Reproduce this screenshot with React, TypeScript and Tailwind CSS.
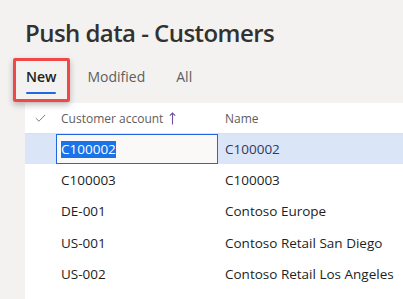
import React from 'react';
import { Check } from 'lucide-react';

const rows = [
  { account: 'C100003', name: 'C100003' },
  { account: 'DE-001', name: 'Contoso Europe' },
  { account: 'US-001', name: 'Contoso Retail San Diego' },
  { account: 'US-002', name: 'Contoso Retail Los Angeles' },
];

export default function App() {
  return (
    <div className="relative flex flex-col w-[403px] h-[299px] overflow-hidden bg-[#f3f2f1] font-['Open_Sans',sans-serif] text-[#323130]">
      {/* Page title */}
      <h1 className="pl-[25px] pt-[17px] text-[24px] leading-[32px] font-semibold tracking-[-0.55px]">
        Push data - Customers
      </h1>

      {/* Tabs */}
      <div className="flex gap-[31px] pl-[26px] mt-[18px] text-[14px] leading-[20px]">
        <div className="flex flex-col">
          <span className="font-semibold text-[#201f1e]">New</span>
          <div className="mt-[5px] h-[2px] rounded-full bg-[#2266e3]" />
        </div>
        <span className="text-[#605e5c]">Modified</span>
        <span className="text-[#605e5c]">All</span>
      </div>

      {/* Grid */}
      <div className="flex-1 ml-[25px] mt-[9px] bg-white text-[13.5px]">
        <div className="flex h-[31px] items-center border-b border-[#e1dfdd] text-[12px] text-[#605e5c]">
          <div className="w-[31px] flex justify-center pt-[1px]">
            <Check size={13} strokeWidth={1.5} className="text-[#605e5c]" />
          </div>
          <div className="w-[162px] pl-[5px] pt-[1px] flex items-center gap-[6px]">
            Customer account
            <svg width="7" height="13" viewBox="0 0 7 13" fill="none" stroke="#6b4fa8" strokeWidth="1.1">
              <path d="M3.5 12.5V1M0.8 3.7L3.5 1L6.2 3.7" />
            </svg>
          </div>
          <div className="pl-[7px] pt-[1px]">Name</div>
        </div>

        <div className="flex h-[30px] items-stretch bg-[#dbe5f8]">
          <div className="w-[31px]" />
          <div className="w-[162px] border-[1.5px] border-[#2266e3] bg-[#faf9f8] pl-[4px] flex items-center">
            <span className="bg-[#1a73e8] text-white leading-[17px]">C100002</span>
          </div>
          <div className="pl-[7px] flex items-center text-[#2f3a5e]">C100002</div>
        </div>

        {rows.map((r) => (
          <div key={r.account} className="flex h-[31.5px] items-center text-[#201f1e]">
            <div className="w-[31px]" />
            <div className="w-[162px] pl-[5px]">{r.account}</div>
            <div className="pl-[7px]">{r.name}</div>
          </div>
        ))}
      </div>

      {/* Highlight around the selected tab */}
      <div className="absolute left-[13px] top-[58px] w-[57px] h-[44px] border-[3px] border-[#f04848] rounded-[2px] shadow-[0_3px_6px_rgba(0,0,0,0.25)]" />
    </div>
  );
}
